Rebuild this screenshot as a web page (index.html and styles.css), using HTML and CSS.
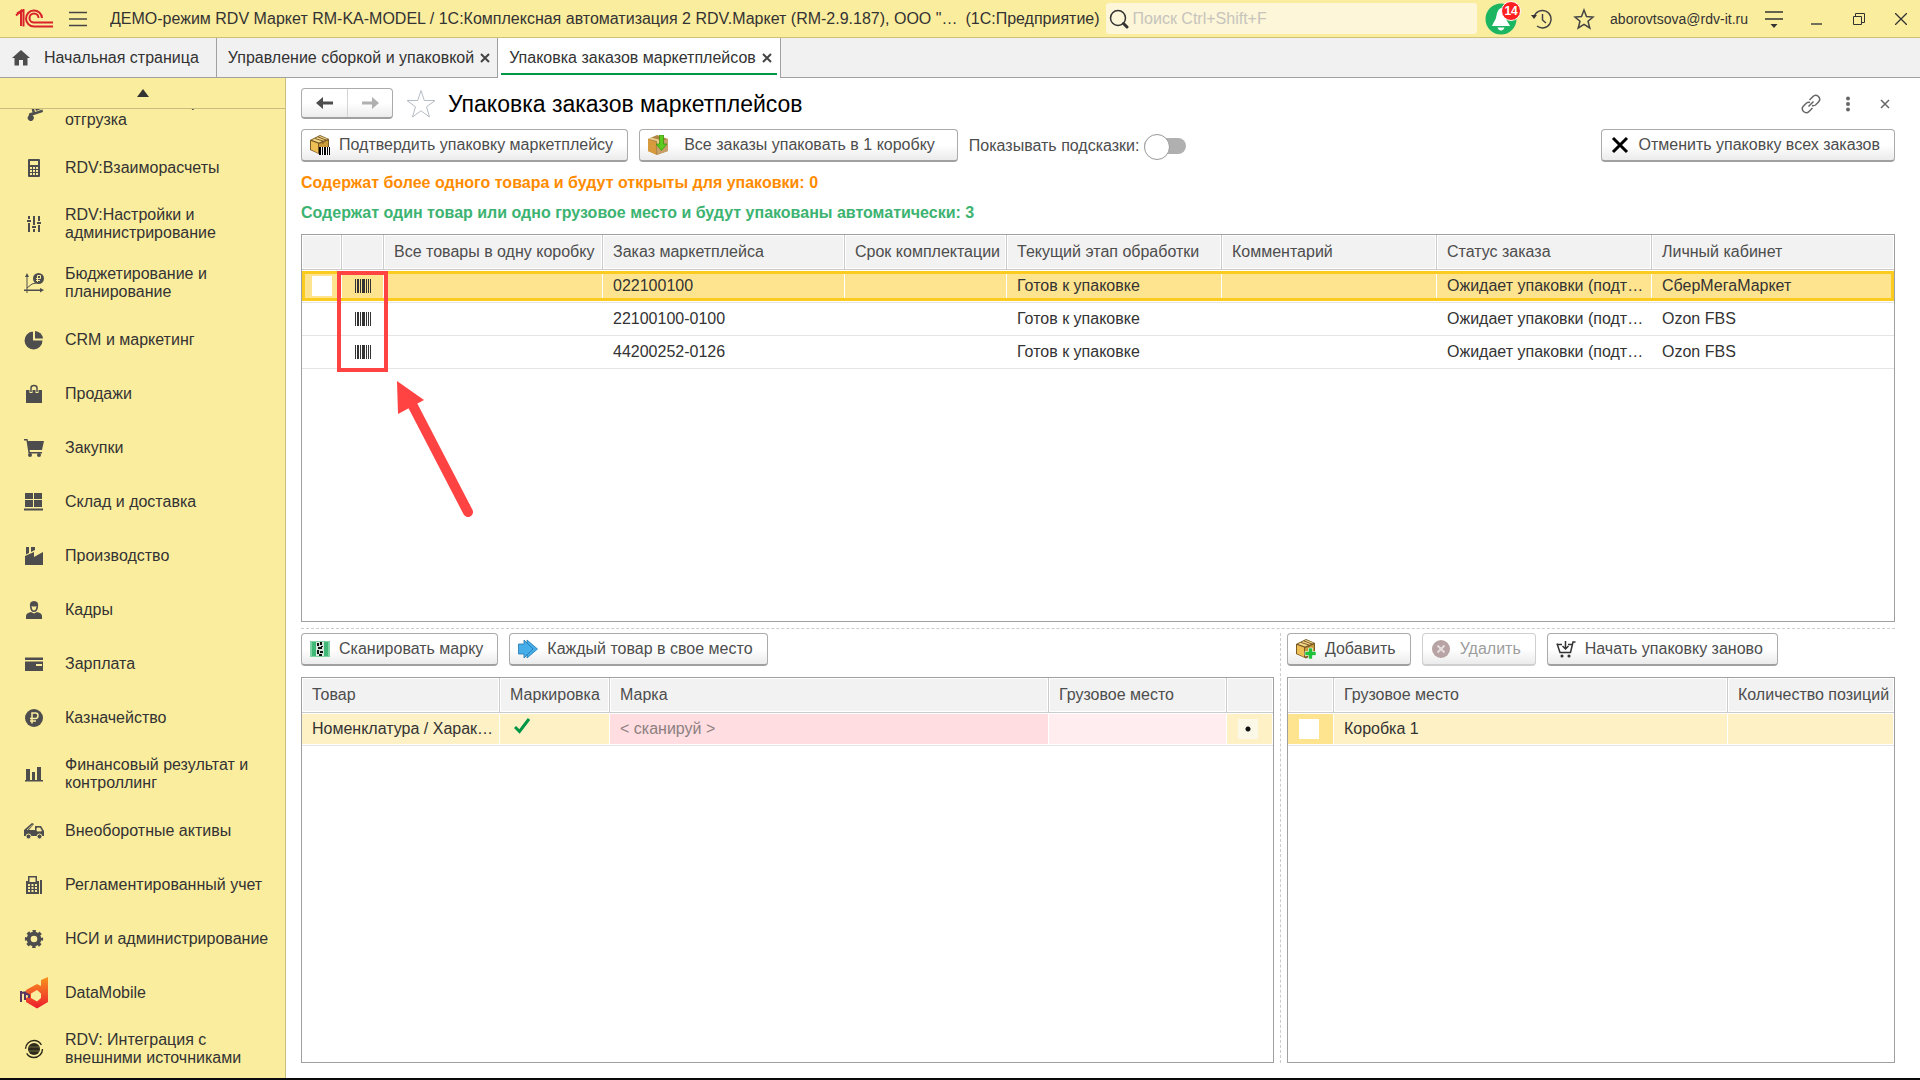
FILE: index.html
```html
<!DOCTYPE html>
<html lang="ru">
<head>
    <meta charset="UTF-8">
    <meta name="viewport" content="width=device-width, initial-scale=1.0">
    <title>Упаковка заказов маркетплейсов</title>
    <link rel="stylesheet" href="styles.css">
</head>
<body>

<header class="topbar">
    <svg class="logo" width="38" height="20" viewBox="0 0 38 20" fill="none" stroke="#d8232a">
        <path d="M1 6.500 6 2V17" stroke-width="2"/>
        <path d="M2 4.500 8.500 1V17.500" stroke-width="2"/>
        <path d="M27 9A8 8 0 1 0 19 17.500H38" stroke-width="2"/>
        <path d="M23.500 9A4.500 4.500 0 1 0 19 13.500H38" stroke-width="2"/>
    </svg>
    <button class="icon-btn burger" aria-label="Меню">
        <svg width="20" height="16" viewBox="0 0 20 16" stroke="#444" stroke-width="1.500"><path d="M1 1.500H19M1 8H19M1 14.500H19"/></svg>
    </button>
    <div class="app-title">ДЕМО-режим RDV Маркет RM-KA-MODEL / 1С:Комплексная автоматизация 2 RDV.Маркет (RM-2.9.187), ООО "…</div>
    <div class="app-platform">(1С:Предприятие)</div>
    <label class="search">
        <svg width="20" height="20" viewBox="0 0 20 20" fill="none" stroke="#333"><circle cx="9" cy="9" r="7.500" stroke-width="1.500"/><path d="M14.500 14.500 18 18" stroke-width="3" stroke-linecap="round"/></svg>
        <input type="text" placeholder="Поиск Ctrl+Shift+F" aria-label="Поиск">
    </label>
    <div class="top-icons">
        <button class="icon-btn bell" aria-label="Уведомления">
            <svg width="32" height="32" viewBox="0 0 32 32"><circle cx="16" cy="16" r="15.500" fill="#1cb663"/><path d="M16 5C12 7 12 11 11 15 10 18 8 20 7 23H25C24 20 21 18 21 15 20 10 20 7 16 5ZM12.500 24.500H19.500Q18.500 27.500 16 27.500T12.500 24.500Z" fill="#fff"/></svg>
            <span class="badge">14</span>
        </button>
        <button class="icon-btn" aria-label="История">
            <svg width="22" height="22" viewBox="0 0 22 22" fill="none" stroke="#444" stroke-width="1.500"><path d="M3 9A8.700 8.700 0 1 1 6 18"/><path d="M11.500 6V12L15 15"/><path d="M0 7H6L3 11Z" fill="#333" stroke="none"/></svg>
        </button>
        <button class="icon-btn" aria-label="Избранное">
            <svg width="22" height="22" viewBox="0 0 22 22" fill="none" stroke="#444" stroke-width="1.500"><path d="M11 2 13.500 8.500 20 9 15 13.300 16.800 20 11 16.300 5.200 20 7 13.300 2 9 8.500 8.500Z"/></svg>
        </button>
        <a class="user" href="#">aborovtsova@rdv-it.ru</a>
        <button class="icon-btn settings" aria-label="Настройки">
            <svg width="18" height="18" viewBox="0 0 18 18"><path d="M0 2H18M0 9H18" stroke="#333" stroke-width="1.500"/><path d="M5.500 14H12.500L9 18Z" fill="#333"/></svg>
        </button>
        <button class="icon-btn win" aria-label="Свернуть">
            <svg width="12" height="12" viewBox="0 0 12 12"><path d="M0 11H11" stroke="#444" stroke-width="1.500"/></svg>
        </button>
        <button class="icon-btn win" aria-label="Восстановить">
            <svg width="12" height="12" viewBox="0 0 12 12" fill="none" stroke="#333"><path d="M.5 3.500H8.500V11.500H.5ZM2.500 3V.5H11.500V9.500H9"/></svg>
        </button>
        <button class="icon-btn win" aria-label="Закрыть">
            <svg width="12" height="12" viewBox="0 0 12 12" stroke="#333" stroke-width="1.300"><path d="M0 0 12 12M12 0 0 12"/></svg>
        </button>
    </div>
</header>

<nav class="tabs">
    <a class="tab tab-home" href="#">
        <svg width="18" height="16" viewBox="0 0 18 16" fill="#4d4d4d"><path d="M9 0 18 8H15.500V15.500H11V10H7V15.500H2.500V8H0Z"/></svg>
        Начальная страница
    </a>
    <a class="tab" href="#">Управление сборкой и упаковкой
        <svg class="tab-close" width="10" height="10" viewBox="0 0 10 10"><path d="M1 1 9 9M9 1 1 9"/></svg>
    </a>
    <a class="tab active" href="#">Упаковка заказов маркетплейсов
        <svg class="tab-close" width="10" height="10" viewBox="0 0 10 10"><path d="M1 1 9 9M9 1 1 9"/></svg>
    </a>
</nav>

<div class="workspace">
    <aside class="sidebar">
        <button class="scroll-up" aria-label="Прокрутить вверх"><svg width="12" height="8" viewBox="0 0 12 8"><path d="M0 8 6 0 12 8Z" fill="#333"/></svg></button>
        <div class="menu-view">
            <ul class="menu">
                <li><a href="#">
                    <span class="ico"><svg width="20" height="20" viewBox="0 0 20 20"><path d="M6 1 8 0 11 11 18.500 8.500 19 11 8.500 14.500A3 3 0 1 1 4.500 15L5.500 12 8.500 11.500Z"/><path d="M10 4 14 2 17 8 12 10Z"/></svg></span>
                    <span>RDV:Заказы, сборка и отгрузка</span></a></li>
                <li><a href="#">
                    <span class="ico"><svg width="20" height="20" viewBox="0 0 20 20"><path fill-rule="evenodd" d="M5 1H15Q16 1 16 2V18Q16 19 15 19H5Q4 19 4 18V2Q4 1 5 1ZM6 3V7H14V3ZM6 9V11H8V9ZM9 9V11H11V9ZM12 9V11H14V9ZM6 12V14H8V12ZM9 12V14H11V12ZM12 12V14H14V12ZM6 15V17H8V15ZM9 15V17H11V15ZM12 15V17H14V15Z"/></svg></span>
                    <span>RDV:Взаиморасчеты</span></a></li>
                <li><a href="#">
                    <span class="ico"><svg width="20" height="20" viewBox="0 0 20 20"><path d="M4 2H6V5H4ZM3 6H7V8H3ZM4 9H6V18H4ZM9 2H11V11H9ZM8 12H12V14H8ZM9 15H11V18H9ZM14 2H16V7H14ZM13 8H17V10H13ZM14 11H16V18H14Z"/></svg></span>
                    <span>RDV:Настройки и администрирование</span></a></li>
                <li><a href="#">
                    <span class="ico"><svg width="20" height="20" viewBox="0 0 20 20"><path d="M2.500 4H1L3 0 5 4H3.500V16.500H16V15L20 17 16 19.500V18H3.500V20H2.500V18H0V16.500H2.500Z"/><path d="M3 15 8 11 12 10" fill="none" stroke="#4d4d4d"/><circle cx="14.500" cy="5.500" r="5.500"/><path d="M13.500 9V2.500H16.500V5.500H12M12 7.500H16" fill="none" stroke="#fbed9e"/></svg></span>
                    <span>Бюджетирование и планирование</span></a></li>
                <li><a href="#">
                    <span class="ico"><svg width="20" height="20" viewBox="0 0 20 20"><path d="M9 1V10.500H18.500A9 9 0 1 1 9 1.500Z"/><path d="M11 1A8.500 8.500 0 0 1 19 8.500H11Z"/></svg></span>
                    <span>CRM и маркетинг</span></a></li>
                <li><a href="#">
                    <span class="ico"><svg width="20" height="20" viewBox="0 0 20 20"><path d="M2 6H18V19H2Z"/><path d="M7 9V4Q7 1.500 10 1.500T13 4V9" fill="none" stroke="#fbed9e" stroke-width="3"/><path d="M7 8V4Q7 1.500 10 1.500T13 4V8" fill="none" stroke="#4d4d4d" stroke-width="1.500"/></svg></span>
                    <span>Продажи</span></a></li>
                <li><a href="#">
                    <span class="ico"><svg width="20" height="20" viewBox="0 0 20 20"><path d="M0 1H3.500L4 3H20L18 12H5.500L6 14H18V15.500H4.500L2.500 2.500H0Z"/><circle cx="6" cy="17" r="2"/><circle cx="15" cy="17" r="2"/></svg></span>
                    <span>Закупки</span></a></li>
                <li><a href="#">
                    <span class="ico"><svg width="20" height="20" viewBox="0 0 20 20"><path d="M1 1H9V7H1ZM10 1H18V7H10ZM1 8H9V15H1ZM10 8H18V15H10ZM0 16.500H19V18.500H0Z"/></svg></span>
                    <span>Склад и доставка</span></a></li>
                <li><a href="#">
                    <span class="ico"><svg width="20" height="20" viewBox="0 0 20 20"><path d="M1 19V10L10 6V11L19 6V19Z"/><path d="M2 1H5V7L2 8.500ZM7 1H11V4L7 6Z"/></svg></span>
                    <span>Производство</span></a></li>
                <li><a href="#">
                    <span class="ico"><svg width="20" height="20" viewBox="0 0 20 20"><path d="M2 19V16Q2 13 7 12L10 13.500 13 12Q18 13 18 16V19Z"/><path fill-rule="evenodd" d="M6 7Q5 1 10 1T14 7Q13.500 12 10 12T6 7ZM7.500 6Q8 10.500 10 10.500T12.500 6Q10 7 7.500 6Z"/></svg></span>
                    <span>Кадры</span></a></li>
                <li><a href="#">
                    <span class="ico"><svg width="20" height="20" viewBox="0 0 20 20"><path fill-rule="evenodd" d="M1 3.500H19V6H1ZM1 7.500H19V17H1ZM12 10V12H18V10Z"/></svg></span>
                    <span>Зарплата</span></a></li>
                <li><a href="#">
                    <span class="ico"><svg width="20" height="20" viewBox="0 0 20 20"><circle cx="10" cy="10" r="9"/><path d="M8 15.500V5H11.500Q14 5 14 7.700T11.500 10.500H6M6 13H12" fill="none" stroke="#fbed9e" stroke-width="1.500"/></svg></span>
                    <span>Казначейство</span></a></li>
                <li><a href="#">
                    <span class="ico"><svg width="20" height="20" viewBox="0 0 20 20"><path d="M1 16H19V17.500H1ZM2 5H6V16H2ZM8 8H11V16H8ZM13 3H17V16H13Z"/></svg></span>
                    <span>Финансовый результат и контроллинг</span></a></li>
                <li><a href="#">
                    <span class="ico"><svg width="20" height="20" viewBox="0 0 20 20"><path d="M0 9 8 2 10 3 5 9H11V5H17L20 10V15H0Z"/><path d="M13 7H16L17.500 10H13ZM3 9 8.500 4" fill="#fbed9e" stroke="#fbed9e" stroke-width=".8"/><g stroke="#fbed9e"><circle cx="4.500" cy="15.500" r="2.500"/><circle cx="15.500" cy="15.500" r="2.500"/></g></svg></span>
                    <span>Внеоборотные активы</span></a></li>
                <li><a href="#">
                    <span class="ico"><svg width="20" height="20" viewBox="0 0 20 20"><path fill-rule="evenodd" d="M4 1H13V6H15V19H2V6H4ZM5.500 2.500V7H11.500V2.500ZM4 9V11H6V9ZM7.500 9V11H9.500V9ZM11 9V11H13V9ZM4 12V14H6V12ZM7.500 12V14H9.500V12ZM11 12V14H13V12ZM4 15V17H6V15ZM7.500 15V17H9.500V15ZM11 15V17H13V15ZM16 5H18V19H16Z"/></svg></span>
                    <span>Регламентированный учет</span></a></li>
                <li><a href="#">
                    <span class="ico"><svg width="20" height="20" viewBox="0 0 20 20"><circle cx="10" cy="10" r="5.300" fill="none" stroke="#4d4d4d" stroke-width="4"/><circle cx="10" cy="10" r="7.800" fill="none" stroke="#4d4d4d" stroke-width="2.600" stroke-dasharray="3.300 2.826" stroke-dashoffset="1.650"/></svg></span>
                    <span>НСИ и администрирование</span></a></li>
                <li><a href="#">
                    <span class="ico"><svg width="28" height="32" viewBox="0 0 28 32">
                        <defs><linearGradient id="dm" x1="0" y1="0" x2="0" y2="1"><stop offset="0" stop-color="#f7941d"/><stop offset="1" stop-color="#ed1c2e"/></linearGradient></defs>
                        <path fill-rule="evenodd" fill="url(#dm)" d="M21 3 28 0V25L17 31.500 6 25V21L10 19 6 16V13L17 7 21 9ZM17 13 11 16.500V21L17 24.500 21 21V16.500Z"/>
                        <path d="M1 25V14M1 16 5 15.500V23M5 16 9 18V21" fill="none" stroke="#5a3560" stroke-width="2"/></svg></span>
                    <span>DataMobile</span></a></li>
                <li><a href="#">
                    <span class="ico"><svg width="20" height="20" viewBox="0 0 20 20"><circle cx="10" cy="10" r="6" fill="#2d2a1a"/><path d="M5 8H15M5 12H15" stroke="#6e683e"/><circle cx="10" cy="10" r="8.500" fill="none" stroke="#2d2a1a" stroke-width="1.400" stroke-dasharray="22 4.700"/></svg></span>
                    <span>RDV: Интеграция с внешними источниками</span></a></li>
            </ul>
        </div>
    </aside>

    <main class="form">
        <div class="form-head">
            <div class="history-nav">
                <button aria-label="Назад"><svg width="18" height="14" viewBox="0 0 18 14"><path d="M0 7 7 1V5.500H17V8.500H7V13Z" fill="#4d4d4d"/></svg></button>
                <button aria-label="Вперед"><svg width="18" height="14" viewBox="0 0 18 14"><path d="M18 7 11 1V5.500H1V8.500H11V13Z" fill="#b0b0b0"/></svg></button>
            </div>
            <svg class="fav" width="30" height="30" viewBox="0 0 30 30" fill="#fff" stroke="#b5bcc4"><path d="M15 1.500 18.300 11.500H29L20.500 17.800 23.500 28 15 21.800 6.500 28 9.500 17.800 1 11.500H11.700Z"/></svg>
            <h1>Упаковка заказов маркетплейсов</h1>
            <div class="form-tools">
                <button class="icon-btn" aria-label="Ссылка"><svg width="20" height="20" viewBox="0 0 20 20" fill="none" stroke="#666" stroke-width="1.500"><path d="M8.500 6 12 2.500Q14.500 0 17.500 2.500 20 5.500 17.500 8L14.500 11Q13 12 11 11.500M11.500 14 8 17.500Q5.500 20 2.500 17.500 0 14.500 2.500 12L5.500 9Q7 8 9 8.500M7.500 12.500 12.500 7.500"/></svg></button>
                <button class="icon-btn" aria-label="Еще"><svg width="6" height="16" viewBox="0 0 6 16" fill="#666"><circle cx="3" cy="2.500" r="2"/><circle cx="3" cy="8" r="2"/><circle cx="3" cy="13.500" r="2"/></svg></button>
                <button class="icon-btn" aria-label="Закрыть форму"><svg width="20" height="20" viewBox="0 0 20 20" stroke="#666" stroke-width="1.500"><path d="M6 6 14 14M14 6 6 14"/></svg></button>
            </div>
        </div>

        <div class="toolbar">
            <button class="btn">
                <svg width="20" height="20" viewBox="0 0 20 20"><path d="M0 5 10 0 19 4V15L10 19.500 0 15Z" fill="#7a5b26"/><path d="M1 6 8 8.500V18L1 14.500Z" fill="#eebf55"/><path d="M9 9 18 5.500V14L9 18Z" fill="#c99a38"/><path d="M2 5 10 1 17.500 4 9 7.500Z" fill="#f4d98c"/><path d="M5 3.500 13 6V9M8 2 16 5" stroke="#7a5b26" fill="none"/><path d="M9 12H20V20H9Z" fill="#fff"/><path d="M9 12H11V20H9ZM12 12H13V20H12ZM14 12H16V20H14ZM17 12H18V20H17ZM19 12H20V20H19Z" fill="#000"/></svg>
                <span>Подтвердить упаковку маркетплейсу</span>
            </button>
            <button class="btn wide">
                <svg width="20" height="20" viewBox="0 0 20 20"><path d="M0 4 9 0 20 4V16L9 20 0 16Z" fill="#b08445"/><path d="M0 4 8 7V19.500L0 16Z" fill="#d79a3d"/><path d="M9 7 20 4V16L9 19.500Z" fill="#c9a067"/><path d="M3 2.500 12 5V9L9 10V6L1 4Z" fill="#ebcf8f"/><path d="M11.500 0H15.500V9H19L13.500 15.500 8 9H11.500Z" fill="#5ccb1e" stroke="#3a9610" stroke-width=".8"/></svg>
                <span>Все заказы упаковать в 1 коробку</span>
            </button>
            <label class="switch">Показывать подсказки: <input type="checkbox"></label>
            <button class="btn to-right">
                <svg width="20" height="20" viewBox="0 0 20 20" stroke="#000" stroke-width="3"><path d="M3 3 17 17M17 3 3 17"/></svg>
                <span>Отменить упаковку всех заказов</span>
            </button>
        </div>

        <p class="note note-orange">Содержат более одного товара и будут открыты для упаковки: 0</p>
        <p class="note note-green">Содержат один товар или одно грузовое место и будут упакованы автоматически: 3</p>

        <div class="grid-box orders">
            <table>
                <colgroup>
                    <col class="c-check"><col class="c-code"><col class="c-all"><col class="c-order"><col class="c-term"><col class="c-stage"><col class="c-stage"><col class="c-stage"><col>
                </colgroup>
                <thead>
                    <tr><th></th><th></th><th>Все товары в одну коробку</th><th>Заказ маркетплейса</th><th>Срок комплектации</th><th>Текущий этап обработки</th><th>Комментарий</th><th>Статус заказа</th><th>Личный кабинет</th></tr>
                </thead>
                <tbody>
                    <tr class="selected">
                        <td class="center"><input class="pick" type="checkbox" aria-label="Выбрать заказ"></td>
                        <td class="center"><svg class="barcode" width="16" height="14" viewBox="0 0 16 14"><path d="M0 0H1V14H0ZM2 0H4V14H2ZM5 0H6V14H5ZM7 0H10V14H7ZM11 0H12V14H11ZM13 0H14V14H13ZM15 0H16V14H15Z"/></svg></td>
                        <td></td><td>022100100</td><td></td><td>Готов к упаковке</td><td></td><td>Ожидает упаковки (подт…</td><td>СберМегаМаркет</td>
                    </tr>
                    <tr>
                        <td></td>
                        <td class="center"><svg class="barcode" width="16" height="14" viewBox="0 0 16 14"><path d="M0 0H1V14H0ZM2 0H4V14H2ZM5 0H6V14H5ZM7 0H10V14H7ZM11 0H12V14H11ZM13 0H14V14H13ZM15 0H16V14H15Z"/></svg></td>
                        <td></td><td>22100100-0100</td><td></td><td>Готов к упаковке</td><td></td><td>Ожидает упаковки (подт…</td><td>Ozon FBS</td>
                    </tr>
                    <tr>
                        <td></td>
                        <td class="center"><svg class="barcode" width="16" height="14" viewBox="0 0 16 14"><path d="M0 0H1V14H0ZM2 0H4V14H2ZM5 0H6V14H5ZM7 0H10V14H7ZM11 0H12V14H11ZM13 0H14V14H13ZM15 0H16V14H15Z"/></svg></td>
                        <td></td><td>44200252-0126</td><td></td><td>Готов к упаковке</td><td></td><td>Ожидает упаковки (подт…</td><td>Ozon FBS</td>
                    </tr>
                </tbody>
            </table>
            <div class="mark-frame"></div>
            <svg class="mark-arrow" width="82" height="138" viewBox="0 0 82 138"><path d="M16 25 71 131" stroke="#ff4343" stroke-width="10" stroke-linecap="round"/><path d="M0 0 27 19 1 33Z" fill="#ff4343"/></svg>
        </div>

        <div class="splitter"></div>

        <div class="lower">
            <section class="pane">
                <div class="toolbar">
                    <button class="btn">
                        <svg width="20" height="20" viewBox="0 0 20 20"><path d="M0 2H20V18H0Z" fill="#7fd3a4"/><path d="M2 3H18V17H2Z" fill="#3fb878"/><path d="M6 3H14V17H6Z" fill="#d9e8df"/><path d="M7 4H9V7H7ZM10 3H12V6H10ZM8 8H12V10H8ZM7 11H9V15H7ZM10 12H13V14H10ZM9 15H12V17H9ZM11 7H13V8H11Z" fill="#111"/></svg>
                        <span>Сканировать марку</span>
                    </button>
                    <button class="btn">
                        <svg width="20" height="20" viewBox="0 0 20 20" fill="#45aee8" stroke="#2277b0" stroke-width=".8"><path d="M9 1 19.500 10 9 19V15L15 10 9 5Z"/><path d="M.5 5H6V1L15 10 6 19V15H.5Z"/></svg>
                        <span>Каждый товар в свое место</span>
                    </button>
                </div>
                <div class="grid-box">
                    <table>
                        <colgroup><col class="c-goods"><col class="c-marking"><col><col class="c-place"><col class="c-dot"></colgroup>
                        <thead>
                            <tr><th>Товар</th><th>Маркировка</th><th>Марка</th><th>Грузовое место</th><th></th></tr>
                        </thead>
                        <tbody>
                            <tr class="current">
                                <td>Номенклатура / Харак…</td>
                                <td><svg class="check" width="16" height="16" viewBox="0 0 16 16" fill="none" stroke="#009646" stroke-width="3"><path d="M1 9 5.500 13.500 15 1"/></svg></td>
                                <td class="scan">&lt; сканируй &gt;</td>
                                <td class="empty"></td>
                                <td class="center"><span class="dot"></span></td>
                            </tr>
                        </tbody>
                    </table>
                </div>
            </section>
            <section class="pane pane-right">
                <div class="toolbar">
                    <button class="btn">
                        <svg width="20" height="20" viewBox="0 0 20 20"><path d="M0 5 10 0 19 4V15L10 19.500 0 15Z" fill="#7a5b26"/><path d="M1 6 8 8.500V18L1 14.500Z" fill="#eebf55"/><path d="M9 9 18 5.500V14L9 18Z" fill="#c99a38"/><path d="M2 5 10 1 17.500 4 9 7.500Z" fill="#f4d98c"/><path d="M5 3.500 13 6V9M8 2 16 5" stroke="#7a5b26" fill="none"/><path d="M12.500 9H16.500V12.500H20V16.500H16.500V20H12.500V16.500H9V12.500H12.500Z" fill="#1fc23a" stroke="#fff" stroke-width=".6"/></svg>
                        <span>Добавить</span>
                    </button>
                    <button class="btn" disabled>
                        <svg width="20" height="20" viewBox="0 0 20 20"><circle cx="10" cy="10" r="9" fill="#b7a3a3"/><path d="M6.500 6.500 13.500 13.500M13.500 6.500 6.500 13.500" stroke="#e6dede" stroke-width="2"/></svg>
                        <span>Удалить</span>
                    </button>
                    <button class="btn">
                        <svg width="20" height="20" viewBox="0 0 20 20" fill="none" stroke="#333" stroke-width="1.500"><path d="M1 4.500 4 13.500H14.500L17 3H19.500M1.500 5.500H6M12 5.500H16M9.500 2V9.500M6.500 7 9.500 10 12.500 7"/><circle cx="6" cy="17" r=".8"/><circle cx="13" cy="17" r=".8"/></svg>
                        <span>Начать упаковку заново</span>
                    </button>
                </div>
                <div class="grid-box">
                    <table>
                        <colgroup><col class="c-pick"><col><col class="c-count"></colgroup>
                        <thead>
                            <tr><th></th><th>Грузовое место</th><th>Количество позиций</th></tr>
                        </thead>
                        <tbody>
                            <tr class="current">
                                <td class="center strong"><input class="pick" type="checkbox" aria-label="Выбрать грузовое место"></td>
                                <td>Коробка 1</td>
                                <td></td>
                            </tr>
                        </tbody>
                    </table>
                </div>
            </section>
        </div>
    </main>
</div>

</body>
</html>
```
FILE: styles.css
```css
* {
    box-sizing: border-box;
}
body {
    margin: 0;
    height: 100vh;
    display: flex;
    flex-direction: column;
    border-bottom: 2px solid #0a0a0a;
    font-family: "Liberation Sans", Arial, sans-serif;
    font-size: 16px;
    line-height: 18px;
    color: #333;
    background-color: #fff;
}
a {
    color: inherit;
    text-decoration: none;
}
button, input {
    font: inherit;
    color: inherit;
}
svg {
    display: block;
    flex-shrink: 0;
}
.icon-btn {
    display: flex;
    align-items: center;
    justify-content: center;
    padding: 0;
    border: none;
    background: none;
    cursor: pointer;
}

/* Верхняя панель */
.topbar {
    display: flex;
    align-items: center;
    flex-shrink: 0;
    height: 38px;
    padding: 0 13px 0 15px;
    background-color: #fbed9e;
    border-bottom: 1px solid #cfc07a;
}
.burger {
    margin: 0 22px 0 15px;
}
.app-title {
    min-width: 0;
    overflow: hidden;
    white-space: nowrap;
    text-overflow: ellipsis;
}
.app-platform {
    margin: 0 6px 0 8px;
    white-space: nowrap;
}
.search {
    display: flex;
    align-items: center;
    flex: 1;
    gap: 4px;
    height: 31px;
    padding: 0 3px;
    border-radius: 3px;
    background-color: #fdf6d8;
}
.search input {
    flex: 1;
    min-width: 0;
    padding: 0;
    border: none;
    outline: none;
    background: none;
}
.search input::placeholder {
    color: #c6c4bd;
}
.top-icons {
    display: flex;
    align-items: center;
    margin-left: 8px;
}
.bell {
    position: relative;
    margin-right: 14px;
}
.bell + .icon-btn {
    margin-right: 20px;
}
.badge {
    position: absolute;
    top: -2px;
    right: -4px;
    width: 20px;
    height: 20px;
    border: 1px solid #fff;
    border-radius: 50%;
    background-color: #ff2121;
    color: #fff;
    font-size: 12px;
    font-weight: bold;
    line-height: 18px;
    text-align: center;
}
.user {
    margin: 0 17px 0 15px;
    font-size: 14px;
}
.settings {
    margin-right: 28px;
}
.win + .win {
    margin-left: 30px;
}

/* Закладки */
.tabs {
    display: flex;
    flex-shrink: 0;
    height: 40px;
    background-color: #f1f1f1;
    border-bottom: 1px solid #a0a0a0;
}
.tab {
    display: flex;
    align-items: center;
    gap: 6px;
    padding: 0 7px 0 11px;
    border-right: 1px solid #a0a0a0;
    white-space: nowrap;
}
.tab-home {
    gap: 14px;
    padding-left: 12px;
    padding-right: 17px;
}
.tab-close {
    stroke: #444;
    stroke-width: 2;
}
.tab.active {
    margin-bottom: -1px;
    border-left: 3px solid #fff;
    padding: 0 8px;
    background: linear-gradient(#009646, #009646) 0 35px / calc(100% - 3px) 2px no-repeat #fff;
}

.workspace {
    display: flex;
    flex: 1;
    min-height: 0;
}

/* Панель разделов */
.sidebar {
    display: flex;
    flex-direction: column;
    flex-shrink: 0;
    width: 286px;
    background-color: #fbed9e;
    border-right: 1px solid #c9bd80;
}
.scroll-up {
    display: flex;
    align-items: center;
    justify-content: center;
    flex-shrink: 0;
    height: 31px;
    border: none;
    border-bottom: 1px solid #c9bd80;
    background: none;
}
.menu-view {
    flex: 1;
    min-height: 0;
    overflow: hidden;
}
.menu {
    margin: -28px 0 0; /* список прокручен вниз */
    padding: 0;
    list-style: none;
}
.menu a {
    display: flex;
    align-items: center;
    gap: 17px;
    min-height: 54px;
    padding: 12px 8px 11px 20px;
}
.ico {
    display: flex;
    justify-content: center;
    flex-shrink: 0;
    width: 28px;
    margin: -8px 0;
    fill: #4d4d4d;
}

/* Форма */
.form {
    display: flex;
    flex-direction: column;
    flex: 1;
    min-width: 0;
    padding: 10px 25px 15px 15px;
}
.form-head {
    display: flex;
    align-items: center;
    height: 31px;
    margin-bottom: 10px;
}
.history-nav {
    display: flex;
    height: 31px;
    border: 1px solid #ababab;
    border-bottom: 2px solid #a0a0a0;
    border-radius: 4px;
    background: linear-gradient(#fff 50%, #ececec);
}
.history-nav button {
    display: flex;
    align-items: center;
    justify-content: center;
    width: 45px;
    padding: 0;
    border: none;
    background: none;
}
.history-nav button + button {
    border-left: 1px solid #d5d5d5;
}
.fav {
    margin: 0 12px 0 13px;
}
h1 {
    margin: 0;
    font-size: 23px;
    font-weight: normal;
    line-height: 28px;
    color: #000;
}
.form-tools {
    display: flex;
    align-items: center;
    gap: 24px;
    margin-left: auto;
}
.toolbar {
    display: flex;
    align-items: center;
    gap: 11px;
}
.btn {
    display: flex;
    align-items: center;
    gap: 9px;
    height: 33px;
    padding: 0 14px 0 8px;
    border: 1px solid #ababab;
    border-bottom: 2px solid #a0a0a0;
    border-radius: 4px;
    background: linear-gradient(#fff 50%, #ebebeb);
    color: #4d4d4d;
    white-space: nowrap;
    cursor: pointer;
}
.btn:disabled {
    border-color: #cfcfcf;
    color: #9d9d9d;
}
.btn.wide {
    gap: 16px;
    padding-right: 22px;
}
.btn.to-right {
    margin-left: auto;
}
.switch {
    display: flex;
    align-items: center;
    gap: 5px;
    color: #4d4d4d;
}
.switch input {
    position: relative;
    appearance: none;
    width: 42px;
    height: 16px;
    margin: 0;
    border-radius: 8px;
    background-color: #b0b0b0;
}
.switch input::before {
    content: "";
    position: absolute;
    top: -4px;
    left: 0;
    width: 24px;
    height: 24px;
    border: 1px solid #999;
    border-radius: 50%;
    background-color: #fff;
}
.note {
    margin: 12px 0 0;
    font-weight: bold;
}
.note-orange {
    color: #ff8c00;
}
.note-green {
    color: #3cb371;
}

/* Таблицы */
.grid-box {
    position: relative;
    flex: 1;
    min-height: 0;
    border: 1px solid #a0a0a0;
}
.orders {
    margin-top: 12px;
}
table {
    width: 100%;
    table-layout: fixed;
    border-collapse: separate;
    border-spacing: 0;
}
th, td {
    overflow: hidden;
    padding: 0 0 0 10px;
    text-align: left;
    white-space: nowrap;
    text-overflow: ellipsis;
}
th {
    height: 35px;
    border-right: 1px solid #ccc;
    border-bottom: 1px solid #ccc;
    box-shadow: inset 0 0 0 1px #fff;
    background-color: #f2f2f2;
    color: #4d4d4d;
    font-weight: normal;
}
th:last-child {
    border-right: none;
}
td {
    height: 33px;
    border-bottom: 1px solid #e5e5e5;
}
td.center {
    padding: 0;
}
.pane td.center {
    padding-right: 4px;
}
td.center > * {
    margin: 0 auto;
}
.selected td {
    background-color: #ffe48f;
    box-shadow: inset 0 1px #fff, inset 0 -1px #fff, inset 0 4px #fccb1f, inset 0 -4px #fccb1f, inset -1px 0 #fff;
}
.selected td:first-child {
    box-shadow: inset 0 1px #fff, inset 0 -1px #fff, inset 0 4px #fccb1f, inset 0 -4px #fccb1f, inset 3px 0 #fccb1f, inset -1px 0 #fff;
}
.selected td:last-child {
    box-shadow: inset 0 1px #fff, inset 0 -1px #fff, inset 0 4px #fccb1f, inset 0 -4px #fccb1f, inset -3px 0 #fccb1f;
}
.current td {
    background-color: #fdf1c5;
    box-shadow: inset 0 1px #fff, inset 0 -1px #fff, inset -1px 0 #fff;
}
.current td.strong {
    background-color: #ffe48f;
}
.current td.scan {
    background-color: #ffdde1;
    color: #8c8080;
}
.current td.empty {
    background-color: #ffedf0;
}
.pick {
    display: block;
    appearance: none;
    width: 20px;
    height: 20px;
    background-color: #fff;
}
.barcode {
    fill: #333;
}
.check {
    margin: 0 0 6px 4px;
}
.dot {
    display: block;
    width: 20px;
    height: 20px;
    background: radial-gradient(circle, #111 2px, #fcf8e8 3px);
}
.c-check { width: 40px; }
.c-code { width: 42px; }
.c-all { width: 219px; }
.c-order { width: 242px; }
.c-term { width: 162px; }
.c-stage { width: 215px; }
.c-goods { width: 198px; }
.c-marking { width: 110px; }
.c-place { width: 178px; }
.c-dot { width: 46px; }
.c-pick { width: 46px; }
.c-count { width: 166px; }

/* Выделение штрихкодов */
.mark-frame {
    position: absolute;
    top: 36px;
    left: 35px;
    width: 51px;
    height: 101px;
    border: 4px solid #ff4343;
}
.mark-arrow {
    position: absolute;
    top: 146px;
    left: 95px;
}

.splitter {
    margin: 6px 0 4px;
    border-top: 1px dashed #ccc;
}
.lower {
    display: grid;
    grid-template-columns: 8fr 5fr;
    gap: 13px;
    flex: 1;
    flex-basis: 44px;
    min-height: 0;
}
.pane {
    position: relative;
    display: flex;
    flex-direction: column;
    gap: 11px;
    min-width: 0;
}
.pane-right::before {
    content: "";
    position: absolute;
    top: 0;
    bottom: 0;
    left: -7px;
    border-left: 1px dashed #ccc;
}
```
